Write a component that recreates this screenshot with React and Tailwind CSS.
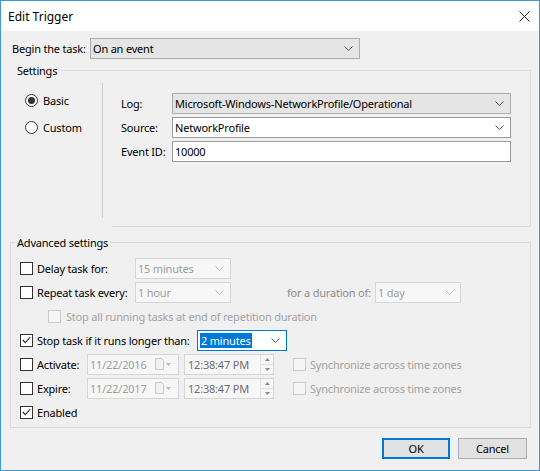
import React from 'react';

const Chevron = ({ color = '#444' }) => (
  <svg width="9" height="5" viewBox="0 0 9 5">
    <polyline points="0.5,0.5 4.5,4.5 8.5,0.5" fill="none" stroke={color} strokeWidth="1" />
  </svg>
);

const Check = ({ checked, disabled }) => (
  <span
    className={`w-[13px] h-[13px] border flex items-center justify-center shrink-0 ${
      disabled ? 'border-[#cccccc] bg-[#f5f5f5]' : 'border-[#333333] bg-white'
    }`}
  >
    {checked && (
      <svg width="9" height="8" viewBox="0 0 9 8">
        <polyline points="0.8,4 3.3,6.6 8.3,1" fill="none" stroke="#222" strokeWidth="1.1" />
      </svg>
    )}
  </span>
);

const Radio = ({ on, label }) => (
  <div className="flex items-center h-[13px] gap-[5px]">
    <span className="w-[13px] h-[13px] rounded-full border border-[#333333] bg-white flex items-center justify-center">
      {on && <span className="w-[7px] h-[7px] rounded-full bg-[#333333]" />}
    </span>
    <span>{label}</span>
  </div>
);

// combo box variants: grey (read only), white, off (disabled), focus
const Combo = ({ text, w, kind = 'white' }) => {
  const box = {
    grey: 'bg-[#e5e5e5] border-[#adadad] text-black',
    white: 'bg-white border-[#9a9a9a] text-black',
    off: 'bg-[#f7f7f7] border-[#d6d6d6] text-[#9d9d9d]',
    focus: 'bg-white border-[#0078d7] text-black',
  }[kind];
  return (
    <div className={`${w} h-[21px] border ${box} flex items-center justify-between pl-[2px] pr-[6px] shrink-0`}>
      {kind === 'focus' ? (
        <span className="bg-[#0078d7] text-white leading-[15px] px-px">{text}</span>
      ) : (
        <span className="leading-[15px]">{text}</span>
      )}
      <Chevron color={kind === 'off' ? '#bdbdbd' : '#555'} />
    </div>
  );
};

const DateBox = ({ text }) => (
  <div className="w-[92px] h-[21px] border border-[#d6d6d6] bg-[#f7f7f7] flex items-center pl-[2px] pr-[7px] text-[#9d9d9d] shrink-0">
    <span className="flex-1">{text}</span>
    <svg width="16" height="12" viewBox="0 0 16 12" className="shrink-0">
      <path d="M0.5 0.5h6l2 2v9h-8z" fill="#f2f2f2" stroke="#c8c8c8" />
      <path d="M11 5h5l-2.5 3z" fill="#b5b5b5" />
    </svg>
  </div>
);

const TimeBox = ({ text }) => (
  <div className="w-[90px] h-[21px] border border-[#d6d6d6] bg-[#f7f7f7] flex items-stretch ml-[5px] shrink-0">
    <span className="flex-1 flex items-center pl-[3px] text-[#6d6d6d]">{text}</span>
    <div className="w-[13px] border-l border-[#e3e3e3] flex flex-col">
      <div className="flex-1 flex items-center justify-center border-b border-[#e3e3e3]">
        <svg width="5" height="3" viewBox="0 0 5 3"><path d="M0 3h5L2.5 0z" fill="#8a8a8a" /></svg>
      </div>
      <div className="flex-1 flex items-center justify-center">
        <svg width="5" height="3" viewBox="0 0 5 3"><path d="M0 0h5L2.5 3z" fill="#8a8a8a" /></svg>
      </div>
    </div>
  </div>
);

const Field = ({ label, children }) => (
  <div className="flex items-center h-[21px]">
    <span className="w-[51px] shrink-0">{label}</span>
    {children}
  </div>
);

export default function App() {
  return (
    <div
      className="w-[540px] h-[471px] border border-[#3d9ad6] bg-[#f0f0f0] flex flex-col text-[11px] leading-[15px] tracking-[-0.2px] text-black whitespace-nowrap overflow-hidden"
      style={{ fontFamily: '"Noto Sans", "Open Sans", sans-serif' }}
    >
      {/* title bar */}
      <div className="h-[30px] bg-white flex items-center justify-between pl-[7px] pr-[9px] shrink-0 text-[12px] tracking-normal">
        <span>Edit Trigger</span>
        <svg width="11" height="11" viewBox="0 0 11 11">
          <path d="M0.5 0.5l10 10M10.5 0.5l-10 10" stroke="#222" strokeWidth="1" />
        </svg>
      </div>

      {/* begin the task */}
      <div className="flex items-center mt-[7px] pl-[11px] shrink-0">
        <span className="w-[78px]">Begin the task:</span>
        <Combo text="On an event" w="w-[270px]" kind="grey" />
      </div>

      {/* settings group */}
      <div className="ml-[9px] w-[521px] mt-[4px] shrink-0">
        <div className="flex items-end h-[14px]">
          <span className="self-center pl-[7px] pr-[4px]">Settings</span>
          <div className="flex-1 h-[7px] border-t border-r border-[#dcdcdc]" />
        </div>
        <div className="border-r border-[#dcdcdc]">
          <div className="flex h-[149px]">
            <div className="w-[92px] pl-[15px] pt-[17px] flex flex-col gap-[14px]">
              <Radio on label="Basic" />
              <Radio label="Custom" />
            </div>
            <div className="w-px h-[135px] mt-[6px] bg-[#d0d0d0]" />
            <div className="pl-[18px] pt-[16px] flex flex-col gap-[3px]">
              <Field label="Log:">
                <Combo text="Microsoft-Windows-NetworkProfile/Operational" w="w-[339px]" kind="grey" />
              </Field>
              <Field label="Source:">
                <Combo text="NetworkProfile" w="w-[339px]" />
              </Field>
              <Field label="Event ID:">
                <div className="w-[339px] h-[21px] border border-[#9a9a9a] bg-white flex items-center pl-[2px]">10000</div>
              </Field>
            </div>
          </div>
          <div className="ml-[102px] h-px bg-[#dcdcdc]" />
        </div>
      </div>

      {/* advanced settings group */}
      <div className="ml-[9px] w-[521px] mt-[8px] shrink-0">
        <div className="flex items-end h-[14px]">
          <div className="w-[5px] h-[7px] border-t border-l border-[#dcdcdc]" />
          <span className="self-center px-[2px]">Advanced settings</span>
          <div className="flex-1 h-[7px] border-t border-r border-[#dcdcdc]" />
        </div>
        <div className="h-[179px] border-l border-r border-b border-[#dcdcdc] pt-[7px] flex flex-col">
          <div className="flex items-center h-[24px] pl-[9px]">
            <Check />
            <span className="ml-[4px] w-[98px]">Delay task for:</span>
            <Combo text="15 minutes" w="w-[96px]" kind="off" />
          </div>
          <div className="flex items-center h-[24px] pl-[9px]">
            <Check />
            <span className="ml-[4px] w-[98px]">Repeat task every:</span>
            <Combo text="1 hour" w="w-[96px]" kind="off" />
            <span className="ml-[56px] w-[88px] text-[#8c8c8c]">for a duration of:</span>
            <Combo text="1 day" w="w-[86px]" kind="off" />
          </div>
          <div className="flex items-center h-[24px] pl-[37px]">
            <Check disabled />
            <span className="ml-[5px] text-[#a3a3a3]">Stop all running tasks at end of repetition duration</span>
          </div>
          <div className="flex items-center h-[24px] pl-[9px]">
            <Check checked />
            <span className="ml-[4px] w-[160px]">Stop task if it runs longer than:</span>
            <Combo text="2 minutes" w="w-[90px]" kind="focus" />
          </div>
          <div className="flex items-center h-[24px] pl-[9px]">
            <Check />
            <span className="ml-[4px] w-[50px]">Activate:</span>
            <DateBox text="11/22/2016" />
            <TimeBox text="12:38:47 PM" />
            <span className="ml-[19px]"><Check disabled /></span>
            <span className="ml-[4px] text-[#a3a3a3]">Synchronize across time zones</span>
          </div>
          <div className="flex items-center h-[24px] pl-[9px]">
            <Check />
            <span className="ml-[4px] w-[50px]">Expire:</span>
            <DateBox text="11/22/2017" />
            <TimeBox text="12:38:47 PM" />
            <span className="ml-[19px]"><Check disabled /></span>
            <span className="ml-[4px] text-[#a3a3a3]">Synchronize across time zones</span>
          </div>
          <div className="flex items-center h-[24px] pl-[9px]">
            <Check checked />
            <span className="ml-[4px]">Enabled</span>
          </div>
        </div>
      </div>

      {/* buttons */}
      <div className="flex justify-end gap-[8px] mt-[10px] pr-[12px] shrink-0">
        <button className="w-[68px] h-[21px] border-2 border-[#0078d7] bg-[#e1e1e1] flex items-center justify-center">OK</button>
        <button className="w-[69px] h-[21px] border border-[#adadad] bg-[#e1e1e1] flex items-center justify-center">Cancel</button>
      </div>
    </div>
  );
}
